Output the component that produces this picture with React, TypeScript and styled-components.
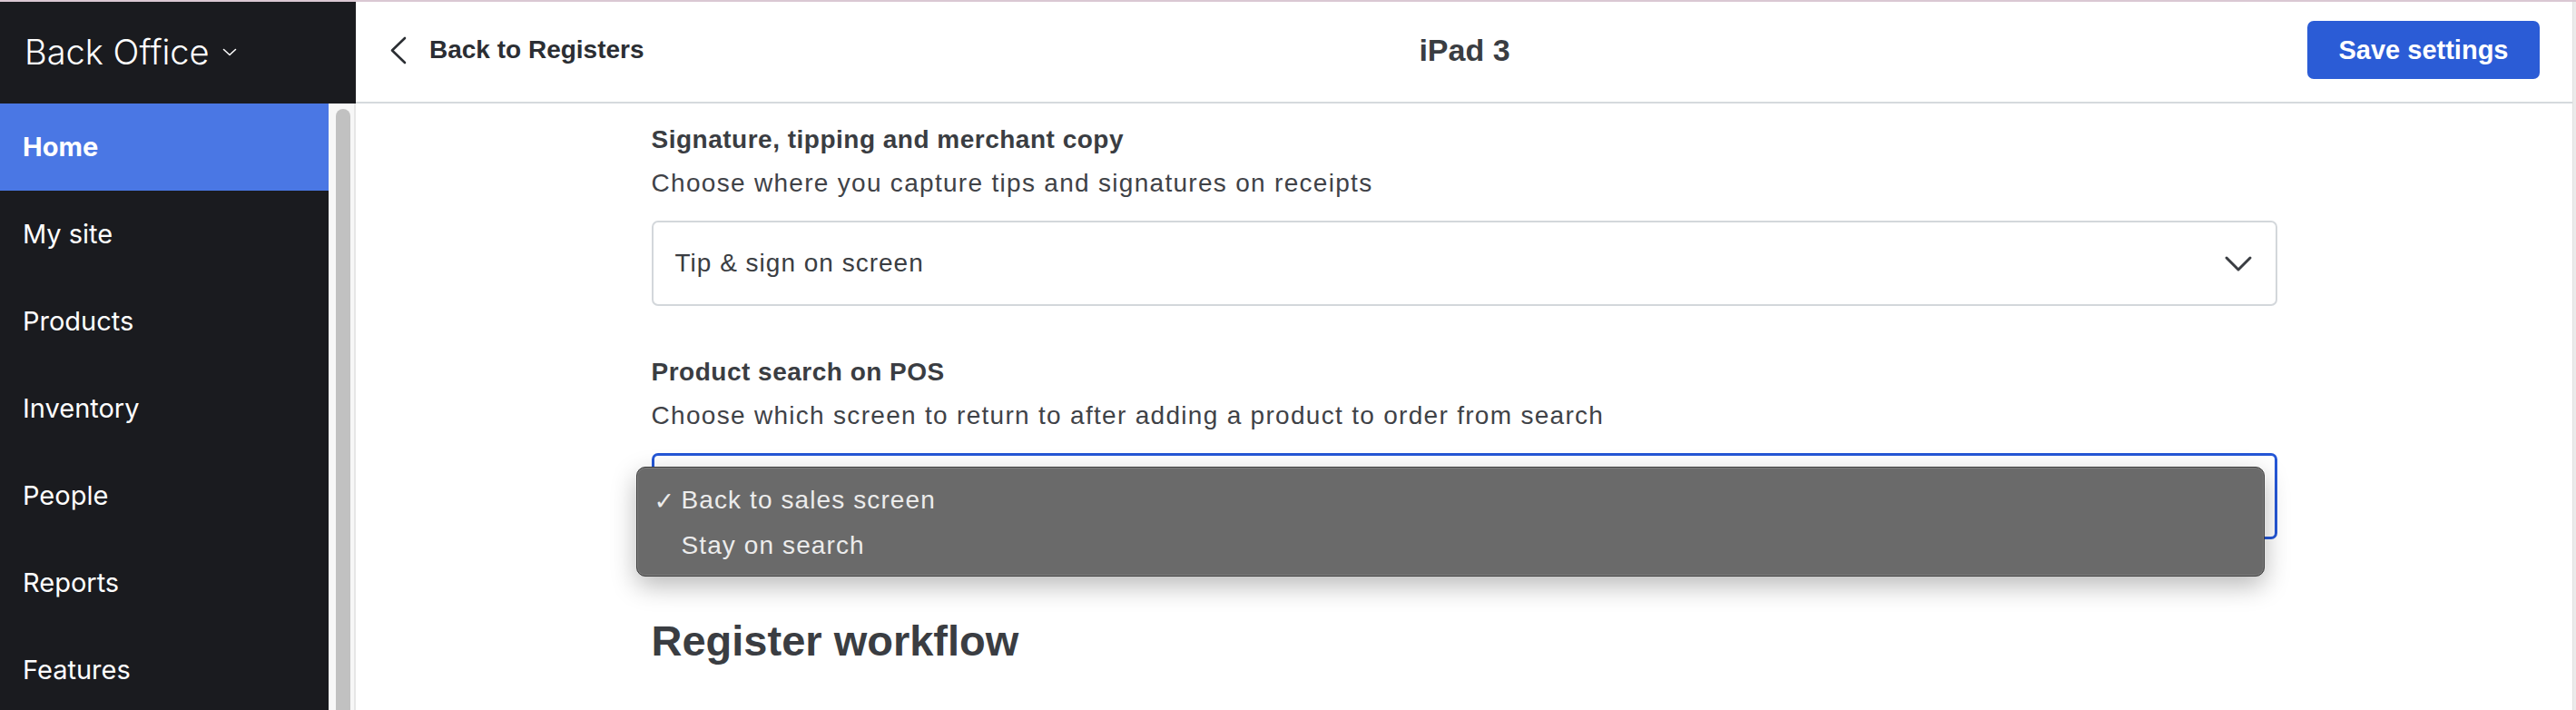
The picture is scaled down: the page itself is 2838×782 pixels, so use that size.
import React from 'react'
import styled, { createGlobalStyle } from 'styled-components'

const GlobalStyle = createGlobalStyle`
  html, body {
    margin: 0;
    padding: 0;
  }
  body {
    width: 2838px;
    height: 782px;
    overflow: hidden;
    background: #ffffff;
    font-family: "Liberation Sans", Arial, sans-serif;
  }
  * {
    box-sizing: border-box;
  }
`

const Page = styled.div`
  width: 2838px;
  height: 782px;
  border-top: 2px solid #dac8d3;
  display: flex;
  overflow: hidden;
`

const Sidebar = styled.aside`
  width: 392px;
  flex-shrink: 0;
  display: flex;
  flex-direction: column;
`

const Brand = styled.div`
  height: 112px;
  background: #1a1b1f;
  color: #ffffff;
  display: flex;
  align-items: center;
  gap: 14px;
  padding: 0 0 2px 27px;
  font-family: Inter, "Liberation Sans", sans-serif;
  font-weight: 300;
  font-size: 38px;
`

const SideBody = styled.div`
  flex: 1;
  min-height: 0;
  display: flex;
`

const Nav = styled.nav`
  width: 362px;
  background: #1a1b1f;
  display: flex;
  flex-direction: column;
`

const NavItem = styled.a<{ $active?: boolean }>`
  height: 96px;
  flex-shrink: 0;
  display: flex;
  align-items: center;
  padding: 0 0 2px 25px;
  font-family: Inter, "Liberation Sans", sans-serif;
  font-size: 29px;
  font-weight: ${(p) => (p.$active ? 700 : 400)};
  color: #ffffff;
  text-decoration: none;
  background: ${(p) => (p.$active ? '#4a77e4' : 'transparent')};
`

const ScrollTrack = styled.div`
  width: 30px;
  background: #f7f7f7;
  border-right: 2px solid #e6e6e6;
  padding: 6px 4px 0 8px;
`

const ScrollThumb = styled.div`
  height: 100%;
  background: #c1c1c1;
  border-radius: 8px 8px 0 0;
`

const Main = styled.main`
  flex: 1;
  min-width: 0;
  display: flex;
  flex-direction: column;
`

const TopBar = styled.header`
  height: 112px;
  flex-shrink: 0;
  border-bottom: 2px solid #d5dadd;
  display: grid;
  grid-template-columns: 1fr auto 1fr;
  align-items: center;
  padding: 0 36px 4px 37px;
`

const BackLink = styled.a`
  display: flex;
  align-items: center;
  gap: 25px;
  font-size: 28px;
  font-weight: 700;
  color: #2b2e33;
  text-decoration: none;
`

const Title = styled.h1`
  margin: 0;
  font-size: 34px;
  font-weight: 700;
  color: #3a3d42;
`

const SaveButton = styled.button`
  justify-self: end;
  width: 256px;
  height: 64px;
  border: none;
  border-radius: 7px;
  background: #2b5cd6;
  color: #ffffff;
  font-family: "Liberation Sans", Arial, sans-serif;
  font-size: 29px;
  font-weight: 700;
`

const Content = styled.div`
  width: 1791px;
  margin: 0 auto;
  padding-top: 23px;
`

const Field = styled.section`
  & + & {
    margin-top: 56px;
  }
`

const Label = styled.div`
  font-size: 28px;
  line-height: 34px;
  font-weight: 700;
  letter-spacing: 0.5px;
  color: #3a3d42;
`

const Hint = styled.div`
  margin-top: 14px;
  font-size: 28px;
  line-height: 34px;
  letter-spacing: 1.3px;
  color: #3f4247;
`

const SelectBox = styled.div<{ $focused?: boolean }>`
  position: relative;
  margin-top: 24px;
  height: ${(p) => (p.$focused ? 95 : 94)}px;
  border: ${(p) => (p.$focused ? '3px solid #2557d6' : '2px solid #d3d7db')};
  border-radius: 7px;
  display: flex;
  align-items: center;
  justify-content: space-between;
  padding: 0 25px 0 24px;
  font-size: 28px;
  letter-spacing: 1px;
  color: #3a3d42;
`

const Popup = styled.ul`
  position: absolute;
  left: -20px;
  right: 11px;
  top: 12px;
  margin: 0;
  padding: 11px 0 8px 19px;
  list-style: none;
  background: #6a6a6a;
  border: 1px solid #3b3b3b;
  border-radius: 10px;
  box-shadow: inset 0 0 0 1px rgba(255, 255, 255, 0.14), 0 10px 28px rgba(0, 0, 0, 0.28);
  color: #ececec;
  z-index: 2;
`

const Option = styled.li`
  display: flex;
  align-items: center;
  height: 50px;
  font-size: 28px;
  letter-spacing: 1.1px;
`

const CheckSlot = styled.span`
  width: 30px;
  flex-shrink: 0;
  font-family: "DejaVu Sans", sans-serif;
  font-size: 27px;
  letter-spacing: 0;
`

const SectionHeading = styled.h2`
  margin: 84px 0 0;
  font-size: 47px;
  line-height: 56px;
  font-weight: 700;
  color: #3a3d42;
`

const RightEdge = styled.div`
  width: 4px;
  flex-shrink: 0;
  background: #ebebeb;
  border-left: 1px solid #e0e0e0;
`

const navItems = ['Home', 'My site', 'Products', 'Inventory', 'People', 'Reports', 'Features']

const ChevronDown = ({ w, h, sw, color }: { w: number; h: number; sw: number; color: string }) => (
  <svg width={w} height={h} viewBox={`0 0 ${w} ${h}`} fill="none">
    <polyline
      points={`${sw},${sw} ${w / 2},${h - sw} ${w - sw},${sw}`}
      stroke={color}
      strokeWidth={sw}
      strokeLinecap="round"
      strokeLinejoin="round"
    />
  </svg>
)

const App = (): JSX.Element => {
  return (
    <>
      <GlobalStyle />
      <Page>
        <Sidebar>
          <Brand>
            Back Office
            <ChevronDown w={16} h={9} sw={1.5} color="#ffffff" />
          </Brand>
          <SideBody>
            <Nav>
              {navItems.map((item, i) => (
                <NavItem key={item} $active={i === 0}>
                  {item}
                </NavItem>
              ))}
            </Nav>
            <ScrollTrack>
              <ScrollThumb />
            </ScrollTrack>
          </SideBody>
        </Sidebar>
        <Main>
          <TopBar>
            <BackLink>
              <svg width="19" height="31" viewBox="0 0 19 31" fill="none">
                <polyline
                  points="17,2 3,15.5 17,29"
                  stroke="#2b2e33"
                  strokeWidth="2.6"
                  strokeLinecap="round"
                  strokeLinejoin="round"
                />
              </svg>
              Back to Registers
            </BackLink>
            <Title>iPad 3</Title>
            <SaveButton>Save settings</SaveButton>
          </TopBar>
          <Content>
            <Field>
              <Label>Signature, tipping and merchant copy</Label>
              <Hint>Choose where you capture tips and signatures on receipts</Hint>
              <SelectBox>
                Tip &amp; sign on screen
                <ChevronDown w={32} h={19} sw={3} color="#3a3d42" />
              </SelectBox>
            </Field>
            <Field>
              <Label>Product search on POS</Label>
              <Hint>Choose which screen to return to after adding a product to order from search</Hint>
              <SelectBox $focused>
                <Popup>
                  <Option>
                    <CheckSlot>✓</CheckSlot>
                    Back to sales screen
                  </Option>
                  <Option>
                    <CheckSlot />
                    Stay on search
                  </Option>
                </Popup>
              </SelectBox>
            </Field>
            <SectionHeading>Register workflow</SectionHeading>
          </Content>
        </Main>
        <RightEdge />
      </Page>
    </>
  )
}

export default App
